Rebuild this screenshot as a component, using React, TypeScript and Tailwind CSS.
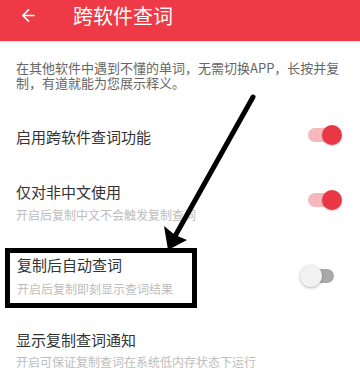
import React from "react";
import { ArrowLeft } from "lucide-react";

function ToggleOn() {
  return (
    <div className="relative flex h-[22px] w-[34px] items-center">
      <div className="h-[14px] w-[32px] rounded-full bg-[#f6b8bd]" />
      <div className="absolute right-0 top-[1px] h-[20px] w-[20px] rounded-full bg-[#e93746] shadow-[0_1px_2px_rgba(0,0,0,0.25)]" />
    </div>
  );
}

function ToggleOff() {
  return (
    <div className="relative flex h-[22px] w-[34px] items-center justify-end">
      <div className="h-[14px] w-[30px] rounded-full bg-[#a9a9a9]" />
      <div className="absolute left-0 top-0 h-[22px] w-[22px] rounded-full bg-[#f1f1f1] shadow-[0_1px_3px_rgba(0,0,0,0.3)]" />
    </div>
  );
}

export default function App() {
  return (
    <div
      className="relative h-[369px] w-[360px] overflow-hidden bg-white"
      style={{ fontFamily: '"Noto Sans CJK SC", "Noto Sans", sans-serif' }}
    >
      <div className="flex h-[41px] items-start bg-[#ee3a46] shadow-[0_1px_2px_rgba(0,0,0,0.12)]">
        <ArrowLeft className="ml-[19px] mt-[6px] h-[19px] w-[19px] text-white" strokeWidth={2.2} />
        <div className="ml-[35px] mt-[2px] text-[20px] leading-[28px] text-white">跨软件查词</div>
      </div>

      <div className="mt-[19px] px-[16px] text-[13px] leading-[15px] text-[#666666]">
        在其他软件中遇到不懂的单词，无需切换APP，长按并复制，有道就能为您展示释义。
      </div>

      <div className="flex h-[50px] items-start justify-between pl-[16px] mt-[22px]">
        <div className="mt-[15px] text-[15px] leading-[20px] text-[#333333]">启用跨软件查词功能</div>
        <div className="mr-[18px] mt-[12px]">
          <ToggleOn />
        </div>
      </div>

      <div className="mt-[20px] flex items-start justify-between pl-[16px]">
        <div className="flex flex-col">
          <div className="text-[15px] leading-[20px] text-[#333333]">仅对非中文使用</div>
          <div className="mt-[5px] text-[12px] leading-[16px] text-[#bdbdbd]">开启后复制中文不会触发复制查词</div>
        </div>
        <div className="mr-[18px] mt-[7px]">
          <ToggleOn />
        </div>
      </div>

      <div className="mt-[32px] flex items-start justify-between pl-[17px]">
        <div className="flex flex-col">
          <div className="text-[15px] leading-[20px] text-[#333333]">复制后自动查词</div>
          <div className="mt-[6px] text-[12px] leading-[16px] text-[#bdbdbd]">开启后复制即刻显示查词结果</div>
        </div>
        <div className="mr-[26px] mt-[10px]">
          <ToggleOff />
        </div>
      </div>

      <div className="mt-[33px] flex items-start justify-between pl-[16px]">
        <div className="flex flex-col">
          <div className="text-[15px] leading-[20px] text-[#333333]">显示复制查词通知</div>
          <div className="mt-[4px] text-[12px] leading-[16px] text-[#bdbdbd]">开启可保证复制查词在系统低内存状态下运行</div>
        </div>
      </div>

      <div className="absolute left-[5px] top-[248px] h-[60px] w-[192px] border-[5px] border-black" />

      <svg className="absolute left-0 top-0" width="360" height="369" viewBox="0 0 360 369">
        <line x1="253" y1="97" x2="174" y2="238" stroke="#000" strokeWidth="5" strokeLinecap="round" />
        <polygon points="168,250 164,226 175,235 187,240" fill="#000" />
      </svg>
    </div>
  );
}
